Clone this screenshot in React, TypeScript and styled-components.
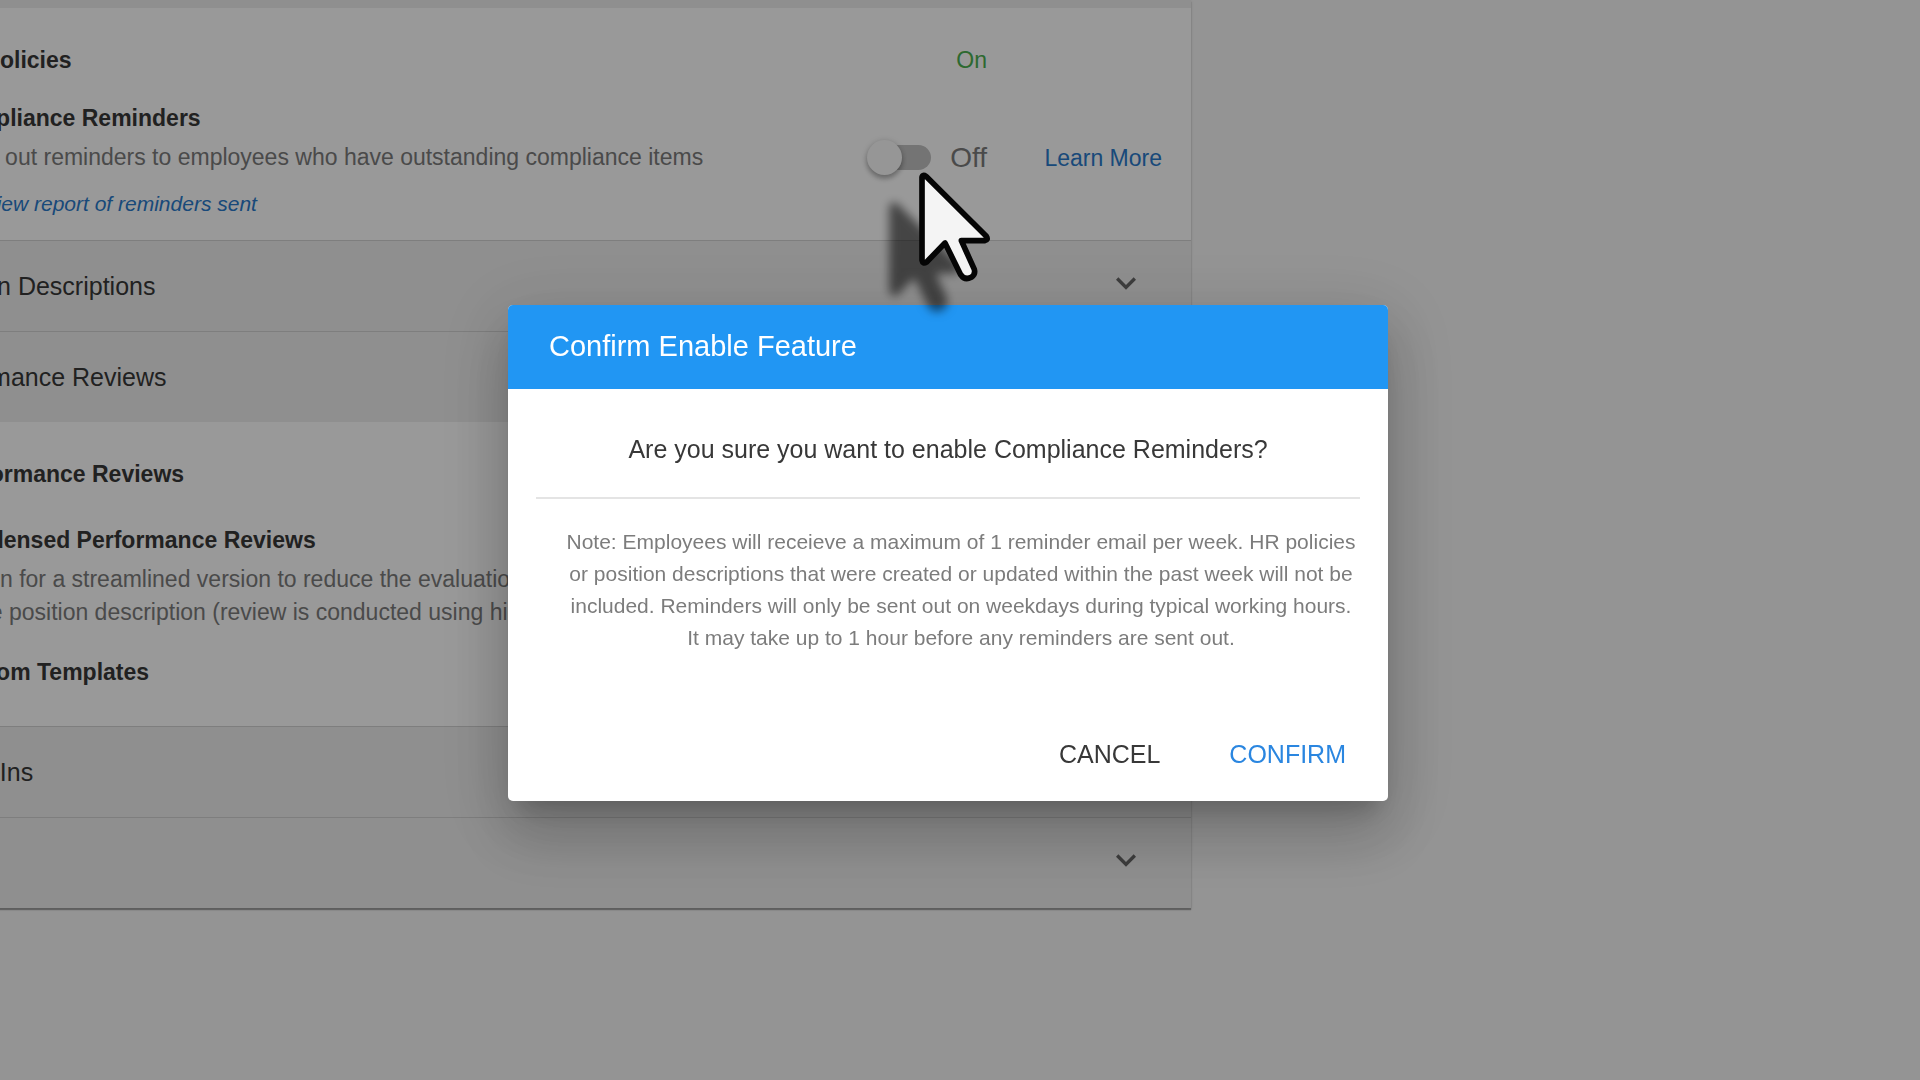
import React, { useState } from "react";
import styled, { createGlobalStyle } from "styled-components";

const GlobalStyle = createGlobalStyle`
  *, *::before, *::after { box-sizing: border-box; }
  body {
    margin: 0;
    background: #f7f7f7;
    color: #383838;
    font-family: "Liberation Sans", Arial, Helvetica, sans-serif;
    font-size: 23px;
    line-height: 32px;
    overflow: hidden;
  }
  button { font-family: inherit; border: 0; background: none; cursor: pointer; }
  h1, h2, h3, p { margin: 0; font-weight: 400; }
`;

const Page = styled.main`
  min-height: 100vh;
  overflow: hidden;
`;

/* The settings list is panned to the left, so its first 120px are off the window. */
const Accordion = styled.section`
  max-width: 1311px;
  margin-left: -120px;
  background: #fff;
  box-shadow: 0 2px 1px rgba(0, 0, 0, 0.3), 0 1px 3px rgba(0, 0, 0, 0.14);
`;

const OpenHeader = styled.div`
  height: 8px;
  background: #efefef;
`;

const PanelHeader = styled.button<{ $ruled?: boolean }>`
  display: flex;
  align-items: center;
  justify-content: space-between;
  width: 100%;
  height: 91px;
  padding: 0 45px 0 42px;
  border-top: ${(p) => (p.$ruled ? "1px solid #d2d2d2" : "0")};
  background: #efefef;
  color: #383838;
  font-size: 25px;
  line-height: 32px;
  text-align: left;
`;

const ChevronIcon = styled.svg`
  width: 40px;
  height: 46px;
  padding-bottom: 6px;
  margin-left: auto;
  fill: #666;
`;

const PanelBody = styled.div<{ $bottom: number }>`
  padding: 36px 29px ${(p) => p.$bottom}px 65px;
`;

const Feature = styled.div<{ $gap?: number }>`
  margin-top: ${(p) => p.$gap ?? 0}px;
`;

const FeatureRow = styled.div<{ $padded?: boolean }>`
  display: grid;
  grid-template-columns: 1fr auto 175px;
  align-items: center;
  padding: ${(p) => (p.$padded ? "7px 0" : "0")};
`;

const FeatureName = styled.h3`
  font-size: 23px;
  font-weight: 700;
  line-height: 32px;
`;

const Description = styled.p`
  color: #7c7c7c;
  line-height: 33px;
`;

const OnLabel = styled.span`
  color: #4caf50;
`;

const SwitchLabel = styled.label`
  display: flex;
  align-items: center;
  gap: 19px;
  color: #7c7c7c;
  font-size: 28px;
`;

const Switch = styled.input`
  appearance: none;
  display: flex;
  align-items: center;
  width: 60px;
  height: 25px;
  margin: 0;
  border-radius: 13px;
  background: #c2c2c2;
  cursor: pointer;

  &::before {
    content: "";
    width: 35px;
    height: 35px;
    flex: none;
    margin-left: -4px;
    border-radius: 50%;
    background: #fafafa;
    box-shadow: 0 4px 5px rgba(0, 0, 0, 0.22), 0 1px 6px rgba(0, 0, 0, 0.2);
  }
  &:checked { background: #90caf9; }
  &:checked::before { margin-left: 29px; background: #2196f3; }
`;

const TextLink = styled.a`
  justify-self: end;
  color: #2a7acb;
  text-decoration: none;
`;

const ReportLine = styled.p`
  padding: 7px 0 0 38px;
  font-size: 21px;
  font-style: italic;
`;

const Backdrop = styled.div`
  position: fixed;
  inset: 0;
  display: flex;
  align-items: center;
  justify-content: center;
  padding: 26px 24px 0 0;
  background: rgba(0, 0, 0, 0.4);
`;

const Dialog = styled.div`
  width: 880px;
  max-width: 94vw;
  overflow: hidden;
  border-radius: 5px;
  background: #fff;
`;

const DialogShadow = styled.div`
  border-radius: 5px;
  box-shadow: 0 17px 23px -11px rgba(0, 0, 0, 0.2),
    0 37px 58px 5px rgba(0, 0, 0, 0.14), 0 14px 70px 12px rgba(0, 0, 0, 0.12);
`;

const DialogTitle = styled.h1`
  padding: 21px 41px 23px;
  background: #2196f3;
  color: #fff;
  font-size: 29px;
  line-height: 40px;
`;

const DialogBody = styled.div`
  padding: 40px 28px 0;
  text-align: center;
`;

const Question = styled.h2`
  padding-bottom: 28px;
  border-bottom: 2px solid #e4e4e4;
  font-size: 25px;
  line-height: 40px;
  color: #383838;
`;

const Note = styled.p`
  padding: 27px 0 0 26px;
  color: #7c7c7c;
  font-size: 21px;
  line-height: 32px;
`;

const Actions = styled.div`
  display: flex;
  justify-content: flex-end;
  gap: 21px;
  padding: 72px 18px 19px;
`;

const ActionButton = styled.button<{ $primary?: boolean }>`
  height: 56px;
  padding: 0 24px;
  border-radius: 5px;
  color: ${(p) => (p.$primary ? "#2a86e0" : "#383838")};
  font-size: 25px;
`;

const Pointer = styled.svg`
  position: fixed;
  left: 883px;
  top: 166px;
  width: 110px;
  height: 154px;
  overflow: visible;
  pointer-events: none;
  filter: drop-shadow(-30px 30px 5px rgba(0, 0, 0, 0.55));
`;

function Chevron() {
  return (
    <ChevronIcon viewBox="0 0 24 24" aria-hidden="true">
      <path d="M7.41 8.58 12 13.17l4.59-4.59L18 10l-6 6-6-6z" />
    </ChevronIcon>
  );
}

function Panel({ title, ruled }: { title?: string; ruled?: boolean }) {
  return (
    <PanelHeader type="button" $ruled={ruled} aria-label={title ?? "Expand section"}>
      {title && <span>{title}</span>}
      <Chevron />
    </PanelHeader>
  );
}

export default function App() {
  const [open, setOpen] = useState(true);
  const [enabled, setEnabled] = useState(false);

  return (
    <>
      <GlobalStyle />
      <Page>
        <Accordion>
          <OpenHeader />
          <PanelBody $bottom={20}>
            <FeatureRow>
              <FeatureName>HR Policies</FeatureName>
              <OnLabel>On</OnLabel>
            </FeatureRow>
            <Feature $gap={26}>
              <FeatureName>Compliance Reminders</FeatureName>
              <FeatureRow $padded>
                <Description>
                  Send out reminders to employees who have outstanding compliance items
                </Description>
                <SwitchLabel>
                  <Switch
                    type="checkbox"
                    checked={enabled}
                    onChange={() => (enabled ? setEnabled(false) : setOpen(true))}
                  />
                  {enabled ? "On" : "Off"}
                </SwitchLabel>
                <TextLink href="#learn-more">Learn More</TextLink>
              </FeatureRow>
              <ReportLine>
                <TextLink href="#report">View report of reminders sent</TextLink>
              </ReportLine>
            </Feature>
          </PanelBody>
          <Panel title="Position Descriptions" ruled />
          <Panel title="Performance Reviews" ruled />
          <PanelBody $bottom={38}>
            <FeatureName>Performance Reviews</FeatureName>
            <Feature $gap={34}>
              <FeatureName>Condensed Performance Reviews</FeatureName>
              <FeatureRow $padded>
                <Description>
                  Option for a streamlined version to reduce the evaluation
                  <br />
                  of the position description (review is conducted using high
                </Description>
              </FeatureRow>
            </Feature>
            <Feature $gap={20}>
              <FeatureName>Custom Templates</FeatureName>
            </Feature>
          </PanelBody>
          <Panel title="Check Ins" ruled />
          <Panel ruled />
        </Accordion>
      </Page>

      {open && (
        <Backdrop>
          <DialogShadow>
            <Dialog role="dialog" aria-modal="true" aria-labelledby="confirm-title">
              <DialogTitle id="confirm-title">Confirm Enable Feature</DialogTitle>
              <DialogBody>
                <Question>Are you sure you want to enable Compliance Reminders?</Question>
                <Note>
                  Note: Employees will receieve a maximum of 1 reminder email per week. HR
                  policies or position descriptions that were created or updated within the
                  past week will not be included. Reminders will only be sent out on
                  weekdays during typical working hours. It may take up to 1 hour before
                  any reminders are sent out.
                </Note>
              </DialogBody>
              <Actions>
                <ActionButton type="button" onClick={() => setOpen(false)}>
                  CANCEL
                </ActionButton>
                <ActionButton
                  type="button"
                  $primary
                  onClick={() => {
                    setEnabled(true);
                    setOpen(false);
                  }}
                >
                  CONFIRM
                </ActionButton>
              </Actions>
            </Dialog>
          </DialogShadow>
        </Backdrop>
      )}

      <Pointer viewBox="189 498 330 462" aria-hidden="true">
        <path
          d="M306 532 Q308 522 318 529 L499 709 Q506 720 494 722 L424 722 L463 808 Q467 824 454 832 Q434 842 422 824 L375 729 L320 786 Q308 793 306 781 Z"
          fill="#f4f4f4"
          stroke="#050505"
          strokeWidth="17"
          strokeLinejoin="round"
        />
      </Pointer>
    </>
  );
}
